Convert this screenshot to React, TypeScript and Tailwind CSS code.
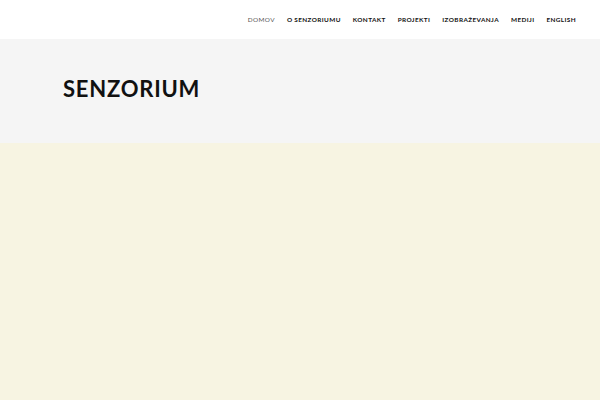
const navItems = [
  { label: "DOMOV", active: true },
  { label: "O SENZORIUMU" },
  { label: "KONTAKT" },
  { label: "PROJEKTI" },
  { label: "IZOBRAŽEVANJA" },
  { label: "MEDIJI" },
  { label: "ENGLISH" },
];

export default function App() {
  return (
    <div className="flex h-[400px] w-[600px] flex-col overflow-hidden bg-white font-['Lato',sans-serif]">
      {/* Header */}
      <header className="flex h-[39px] shrink-0 items-center justify-end pr-[24px]">
        <nav className="flex items-center gap-[12px]">
          {navItems.map((item) => (
            <a
              key={item.label}
              href="#"
              className={`text-[6.4px] tracking-[0.06em] ${
                item.active ? "font-normal text-[#555]" : "font-bold text-[#111]"
              }`}
            >
              {item.label}
            </a>
          ))}
        </nav>
      </header>

      {/* Title band */}
      <section className="flex h-[104px] shrink-0 items-center bg-[#f5f5f5] pl-[63px]">
        <h1 className="pb-[4px] text-[22px] font-bold leading-none tracking-[0.035em] text-[#111]">
          SENZORIUM
        </h1>
      </section>

      {/* Content */}
      <main className="flex-1 bg-[#f7f4e2]" />
    </div>
  );
}
